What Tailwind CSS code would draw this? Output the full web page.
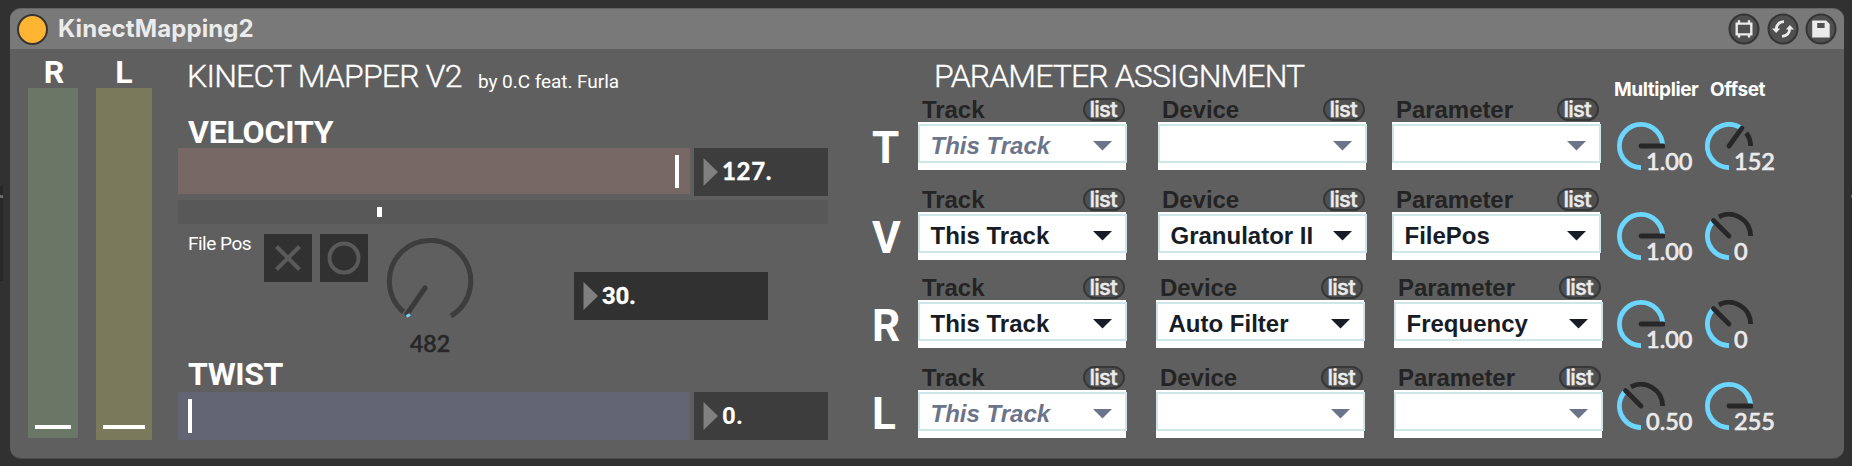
<!DOCTYPE html>
<html lang="en">
<head>
<meta charset="utf-8">
<title>KinectMapping2</title>
<script src="https://cdn.jsdelivr.net/npm/@tailwindcss/browser@4"></script>
</head>
<body class="relative flex h-[466px] w-[1852px] overflow-hidden bg-[#313131] pt-2 pl-[10px] font-[Roboto,sans-serif] text-white">
<!-- neighbouring device edges -->
<div class="absolute top-[186px] left-0 h-[95px] w-[3px] bg-[#272727]"><div class="mt-[9px] h-[3px] bg-[#6b6b6b]"></div></div>
<div class="absolute top-[186px] right-0 h-[95px] w-px bg-[#272727]"><div class="mt-[9px] h-[3px] bg-[#6b6b6b]"></div></div>

<main class="flex h-[451px] w-[1834px] flex-col overflow-hidden rounded-[11px] border-t border-b border-t-[#636363] border-b-[#4a4a4a] bg-[#5f5f5f]">
  <header class="flex h-10 shrink-0 items-center bg-[#797979] pl-[7px] pr-[7px]">
    <div class="h-[31px] w-[31px] rounded-full border-2 border-[#353535] bg-[#ffb532]"></div>
    <h1 class="ml-[10px] font-[Inter,sans-serif] text-[24px] leading-6 font-bold tracking-[0.1px] text-[#ebebeb]">KinectMapping2</h1>
    <div class="ml-auto flex gap-[6.5px]">
      <svg class="h-8 w-8" viewBox="-16 -16 32 32" fill="none"><circle r="14.5" fill="#505050" stroke="#353535" stroke-width="2"/><path d="M-7.3 -5.4H7.3V5.4H-7.3ZM-5 -8.7V-5M5 -8.7V-5M-5 5V8.6M5 5V8.6" stroke="#ebebeb" stroke-width="2.4"/></svg>
      <svg class="h-8 w-8" viewBox="-16 -16 32 32" fill="none"><circle r="14.5" fill="#505050" stroke="#353535" stroke-width="2"/><g id="a"><path d="M1 -7.3C-4 -7.1 -6.8 -4 -6.6 .3" stroke="#ebebeb" stroke-width="2.8"/><path d="M-11 -.6L-2.8 -.6L-6.8 4Z" fill="#ebebeb"/></g><use href="#a" transform="rotate(180)"/></svg>
      <svg class="h-8 w-8" viewBox="-16 -16 32 32" fill="none"><circle r="14.5" fill="#505050" stroke="#353535" stroke-width="2"/><path d="M-8.8 -8.6H5.2L8.7 -5V8.6H-8.8Z" fill="#ebebeb"/><path d="M-3.8 -6H3.6V-1H-3.8Z" fill="#505050"/></svg>
    </div>
  </header>

  <div class="flex grow">
    <!-- level meters -->
    <section class="ml-[18px] flex gap-[18px] pt-[7px] text-center text-[32px] leading-8 font-bold">
      <div class="w-[50px]"><div class="pl-0.5">R</div><div class="flex h-[350px] items-end justify-center bg-[#6b7766] pb-[9.5px]"><div class="h-1 w-9 bg-white"></div></div></div>
      <div class="w-14"><div>L</div><div class="flex h-[352px] items-end justify-center bg-[#7b795b] pb-[11.5px]"><div class="h-1 w-[42px] bg-white"></div></div></div>
    </section>

    <!-- mapper -->
    <section class="ml-[26px] w-[650px] pt-[11px]">
      <div class="flex h-8 items-start pl-[9px]">
        <h2 class="w-[291px] text-[32px] leading-8 font-light tracking-[-0.8px] whitespace-nowrap [-webkit-text-stroke:0.35px_white]">KINECT MAPPER V2</h2>
        <span class="mt-[9.5px] text-[19px] leading-6 tracking-[-0.05px]">by 0.C feat. Furla</span>
      </div>
      <h3 class="mt-6 pl-[10px] text-[32px] leading-8 font-bold tracking-[-0.2px]">VELOCITY</h3>
      <div class="flex h-12 gap-1">
        <div class="flex h-[46px] w-[512px] items-center justify-end bg-[#776765] pr-[11px]"><div class="h-[33px] w-1 bg-white"></div></div>
        <div class="flex h-12 w-[134px] items-center bg-[#3d3d3d] pl-[9px] font-[Lato,sans-serif] text-[24px] leading-6 font-bold"><svg class="h-7 w-[15px]" viewBox="0 0 15 28"><path d="M.5 0L15 14L.5 28Z" fill="#808080"/></svg><span class="pb-0.5 pl-1 tracking-[0.7px] [-webkit-text-stroke:0.4px_white]">127.</span></div>
      </div>
      <div class="mt-1 flex h-6 items-center bg-[#585858] pl-[199px]"><div class="h-[10px] w-[5px] bg-white"></div></div>
      <div class="mt-[10px] flex h-[124px]">
        <span class="w-[75px] pl-[10px] text-[19px] leading-[19px] tracking-[-0.5px] whitespace-nowrap">File Pos</span>
        <svg class="ml-[11px] h-12 w-12 bg-[#313131]" viewBox="0 0 48 48" fill="none" stroke="#5a5a5a" stroke-width="4"><path d="M12.5 12.5L35.5 35.5M35.5 12.5L12.5 35.5"/></svg>
        <svg class="ml-2 h-12 w-12 bg-[#313131]" viewBox="0 0 48 48" fill="none" stroke="#5a5a5a" stroke-width="4"><circle cx="24" cy="24" r="14.5"/></svg>
        <div class="ml-[18px] flex w-[88px] flex-col items-center pt-[3px]">
          <svg class="h-[88px] w-[88px] shrink-0" viewBox="-44 -44 88 88" fill="none" stroke-width="5"><path d="M-26.5 31A40.7 40.7 0 1 1 21 35" stroke="#3d3d3d"/><path d="M-5 7L-23 33" stroke="#3a3a3a" stroke-linecap="round"/><path d="M-23.5 35.5L-20 33.5" stroke="#6dd6ff" stroke-width="3"/></svg>
          <span class="mt-[6px] font-[Lato,sans-serif] text-[23px] leading-6 font-medium text-[#272727] [-webkit-text-stroke:0.6px_#272727]">482</span>
        </div>
        <div class="mt-[38px] ml-[100px] flex h-12 w-[194px] items-center bg-[#313131] pl-[9px] text-[24px] leading-6 font-bold"><svg class="h-7 w-[15px]" viewBox="0 0 15 28"><path d="M.5 0L15 14L.5 28Z" fill="#808080"/></svg><span class="pl-1 tracking-[-0.3px] [-webkit-text-stroke:0.3px_white]">30.</span></div>
      </div>
      <h3 class="pl-[10px] text-[32px] leading-8 font-bold tracking-[-0.4px]">TWIST</h3>
      <div class="mt-0.5 flex h-12 gap-1">
        <div class="flex w-[512px] items-center bg-[#636574] pl-[10px]"><div class="h-[34px] w-1 bg-white"></div></div>
        <div class="flex w-[134px] items-center bg-[#3d3d3d] pl-[9px] text-[24px] leading-6 font-bold"><svg class="h-7 w-[15px]" viewBox="0 0 15 28"><path d="M.5 0L15 14L.5 28Z" fill="#808080"/></svg><span class="pl-1 tracking-[0.3px]">0.</span></div>
      </div>
    </section>

    <!-- assignment -->
    <section class="ml-[43px] w-[737px] pt-[11px]">
      <h2 class="h-9 pl-[63px] text-[32px] leading-8 font-light tracking-[-0.88px] whitespace-nowrap [-webkit-text-stroke:0.35px_white]">PARAMETER ASSIGNMENT</h2>
      <div id="rows"></div>
    </section>

    <!-- knobs -->
    <section class="ml-[6px] pt-[32px]">
      <div class="flex h-[41px] font-[Inter,sans-serif] text-[19px] leading-[18px] font-bold tracking-[-0.4px]"><span class="w-[96px]">Multiplier</span><span>Offset</span></div>
      <div id="knobs"></div>
    </section>
  </div>
</main>
<script>
const field = (name, value, pos, dim) => `
<div class="w-[208px] shrink-0 ${pos}">
  <div class="flex h-[26px] items-center justify-between pl-[4px]">
    <span class="pt-[2px] font-['Liberation_Sans',sans-serif] text-[24px] leading-6 font-bold tracking-[-0.05px] text-[#242424]">${name}</span>
    <span class="mr-[1px] flex h-[23px] w-[42.5px] items-center justify-center rounded-full border-2 border-[#373737] bg-[#505050] pr-px font-[Inter,sans-serif] text-[22px] leading-5 font-medium tracking-[-0.7px] text-[#ebebeb] [-webkit-text-stroke:0.4px_#ebebeb]">list</span>
  </div>
  <div class="h-12 bg-white pt-0.5">
    <div class="flex h-[38.5px] w-[209px] items-center justify-between border-2 border-[#cee6e8] bg-white pr-[13px] pl-[10.5px] font-['Liberation_Sans',sans-serif] text-[24px] leading-6 font-bold whitespace-nowrap ${dim ? 'text-[#6b748a]' : 'text-[#171c26]'}">
      <span class="pt-[6px] ${dim ? 'italic' : ''}">${value}</span>
      <svg class="mt-[5px] h-[10px] w-[19px]" viewBox="0 0 19 10"><path d="M0 0H19L9.5 9.5Z" fill="currentColor"/></svg>
    </div>
  </div>
</div>`;
const rows = [
  ['T', 'h-[74px]', 'mt-[28px]', 'This Track', '', '', true, false],
  ['V', 'mt-4 h-[74px]', 'mt-[28px]', 'This Track', 'Granulator II', 'FilePos', false, false],
  ['R', 'mt-[14px] h-[74px]', 'mt-[28px]', 'This Track', 'Auto Filter', 'Frequency', false, true],
  ['L', 'mt-4 h-[74px]', 'mt-[26px]', 'This Track', '', '', true, true]
];
document.getElementById('rows').innerHTML = rows.map(r => `
<div class="flex ${r[1]}">
  <div class="w-[47px] shrink-0 pl-px text-[44px] leading-[48px] font-bold ${r[2]}">${r[0]}</div>
  ${field('Track', r[3], '', r[6])}
  ${field('Device', r[4], r[7] ? 'ml-[30px]' : 'ml-8', r[6])}
  ${field('Parameter', r[5], r[7] ? 'ml-[30px]' : 'ml-[26px]', r[6])}
</div>`).join('');

// Dial geometry: angle in degrees, clockwise from straight down.
const pt = (a, r) => { const t = a * Math.PI / 180; return (-Math.sin(t) * r).toFixed(2) + ' ' + (Math.cos(t) * r).toFixed(2); };
const arc = (a, b) => `M${pt(a, 21.6)}A21.6 21.6 0 ${b - a > 180 ? 1 : 0} 1 ${pt(b, 21.6)}`;
const knob = (a, text) => `
<div class="relative h-12 w-[88px]">
  <svg class="h-12 w-12" viewBox="-24 -24 48 48" fill="none" stroke-width="4.8">
    ${a < 270 ? `<path d="${arc(a + 17, 270)}" stroke="#272727"/>` : ''}
    <path d="${arc(0, a)}" stroke="#6dd6ff"/>
    <path d="M0 0L${pt(a, 22)}" stroke="#272727" stroke-linecap="round"/>
  </svg>
  <span class="absolute top-[27px] left-[29px] font-[Lato,sans-serif] text-[23.5px] leading-6 font-medium text-[#ebebeb] [-webkit-text-stroke:0.6px_#ebebeb]">${text}</span>
</div>`;
document.getElementById('knobs').innerHTML = [
  ['', 270, '1.00', 216, '152'],
  ['mt-[42px]', 270, '1.00', 135, '0'],
  ['mt-10', 270, '1.00', 135, '0'],
  ['mt-[34px]', 135, '0.50', 270, '255']
].map(k => `<div class="flex pl-[3px] ${k[0]}">${knob(k[1], k[2])}${knob(k[3], k[4])}</div>`).join('');
</script>
</body>
</html>
